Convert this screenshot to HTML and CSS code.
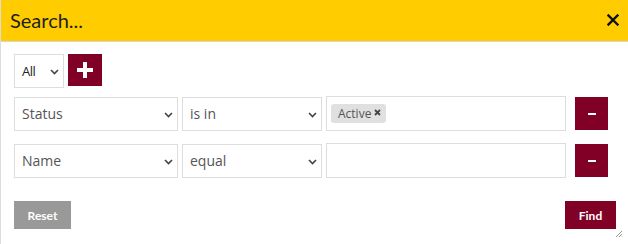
FILE: index.html
```html
<!DOCTYPE html>
<html lang="en">
<head>
    <meta charset="UTF-8">
    <meta name="viewport" content="width=device-width, initial-scale=1.0">
    <title>Search</title>
    <link rel="stylesheet" href="styles.css">
</head>
<body>
    <div class="dialog">
        <div class="dialog-head">
            <span class="dialog-title">Search...</span>
            <span class="dialog-close">
                <svg width="12" height="12" viewBox="0 0 12 12"><path d="M1.5 1.5 L10.5 10.5 M10.5 1.5 L1.5 10.5" stroke="#111" stroke-width="2.4" stroke-linecap="square"/></svg>
            </span>
        </div>
        <div class="dialog-body">
            <div class="combine-row">
                <label class="select-wrap select-small">
                    <select><option>All</option><option>Any</option></select>
                    <svg class="chevron" width="9" height="6" viewBox="0 0 9 6"><path d="M1 1 L4.5 4.5 L8 1" fill="none" stroke="#444" stroke-width="1.6"/></svg>
                </label>
                <button class="btn-square btn-add">
                    <svg width="18" height="18" viewBox="0 0 18 18"><path d="M9 1 V17 M1 9 H17" stroke="#fff" stroke-width="4"/></svg>
                </button>
            </div>

            <div class="criteria">
                <div class="criterion">
                    <label class="select-wrap">
                        <select><option>Status</option><option>Name</option></select>
                        <svg class="chevron" width="9" height="6" viewBox="0 0 9 6"><path d="M1 1 L4.5 4.5 L8 1" fill="none" stroke="#444" stroke-width="1.6"/></svg>
                    </label>
                    <label class="select-wrap">
                        <select><option>is in</option><option>equal</option></select>
                        <svg class="chevron" width="9" height="6" viewBox="0 0 9 6"><path d="M1 1 L4.5 4.5 L8 1" fill="none" stroke="#444" stroke-width="1.6"/></svg>
                    </label>
                    <div class="value-box">
                        <span class="tag">Active
                            <svg class="tag-x" width="7" height="7" viewBox="0 0 7 7"><path d="M1 1 L6 6 M6 1 L1 6" stroke="#444" stroke-width="1.8"/></svg>
                        </span>
                    </div>
                    <button class="btn-square btn-remove"><span class="dash"></span></button>
                </div>
                <div class="criterion">
                    <label class="select-wrap">
                        <select><option>Name</option><option>Status</option></select>
                        <svg class="chevron" width="9" height="6" viewBox="0 0 9 6"><path d="M1 1 L4.5 4.5 L8 1" fill="none" stroke="#444" stroke-width="1.6"/></svg>
                    </label>
                    <label class="select-wrap">
                        <select><option>equal</option><option>is in</option></select>
                        <svg class="chevron" width="9" height="6" viewBox="0 0 9 6"><path d="M1 1 L4.5 4.5 L8 1" fill="none" stroke="#444" stroke-width="1.6"/></svg>
                    </label>
                    <input class="value-box" type="text">
                    <button class="btn-square btn-remove"><span class="dash"></span></button>
                </div>
            </div>

            <div class="dialog-foot">
                <button class="btn btn-reset">Reset</button>
                <button class="btn btn-find">Find</button>
            </div>
        </div>
        <svg class="grip" width="8" height="8" viewBox="0 0 8 8"><path d="M7 1 L1 7 M7 4 L4 7 M7 6.5 L6.5 7" stroke="#999" stroke-width="1"/></svg>
    </div>
</body>
</html>
```

FILE: styles.css
```css
body {
    margin: 0;
    font-family: 'Open Sans', sans-serif;
    background: #ffffff;
}
.dialog {
    position: relative;
    width: 628px;
    height: 244px;
    box-sizing: border-box;
    border-left: 1px solid #dcdcdc;
    background: #ffffff;
}
.dialog-head {
    height: 41px;
    background-color: #ffcc00;
    border-bottom: 1px solid #d6d6d6;
    display: flex;
    align-items: center;
    justify-content: space-between;
    padding: 0 9px 0 9px;
}
.dialog-title {
    font-family: 'Lato', sans-serif;
    font-size: 20px;
    color: #1e1e1e;
    margin-top: -1px;
}
.dialog-close {
    display: flex;
    margin-top: -1px;
}
.dialog-body {
    padding: 12px 12px 0 13px;
}
.combine-row {
    display: flex;
    align-items: flex-start;
    gap: 4px;
}
.select-wrap {
    position: relative;
    display: block;
    height: 34px;
}
.select-wrap select {
    appearance: none;
    -webkit-appearance: none;
    width: 100%;
    height: 100%;
    box-sizing: border-box;
    border: 1px solid #dddddd;
    border-radius: 0;
    background: #ffffff;
    padding: 0 20px 0 7px;
    font-family: 'Open Sans', sans-serif;
    font-size: 14px;
    color: #555555;
    outline: none;
}
.select-wrap .chevron {
    position: absolute;
    right: 5px;
    top: 15px;
    pointer-events: none;
}
.select-small {
    width: 50px;
}
.select-small select {
    font-size: 13px;
    color: #222222;
    letter-spacing: -0.5px;
}
.btn-square {
    border: none;
    padding: 0;
    background-color: #800026;
    display: flex;
    align-items: center;
    justify-content: center;
    cursor: pointer;
}
.btn-add {
    width: 34px;
    height: 32px;
}
.btn-remove {
    width: 33px;
    height: 33px;
    margin-left: 5px;
}
.dash {
    display: block;
    width: 8px;
    height: 2px;
    background: #ffffff;
}
.criteria {
    display: flex;
    flex-direction: column;
    gap: 12px;
    margin-top: 8px;
}
.criterion {
    display: grid;
    grid-template-columns: 164px 140px 240px 38px;
    column-gap: 4px;
    align-items: center;
    height: 35px;
}
.value-box {
    height: 35px;
    box-sizing: border-box;
    border: 1px solid #dddddd;
    background: #ffffff;
    display: flex;
    align-items: center;
    padding: 0 4px;
    margin: 0;
    outline: none;
    font-family: 'Open Sans', sans-serif;
}
.tag {
    display: inline-flex;
    align-items: center;
    height: 19px;
    padding: 0 5px 0 7px;
    background-color: #e0e0e0;
    border-radius: 3px;
    font-size: 12px;
    color: #555555;
    gap: 3px;
}
.tag-x {
    margin-top: -2px;
}
.dialog-foot {
    display: flex;
    justify-content: space-between;
    margin-top: 23px;
}
.btn {
    height: 28px;
    border: none;
    font-family: 'Lato', sans-serif;
    font-weight: bold;
    font-size: 12px;
    color: #ffffff;
    cursor: pointer;
}
.btn-reset {
    width: 57px;
    background-color: #999999;
}
.btn-find {
    width: 51px;
    background-color: #800026;
}
.grip {
    position: absolute;
    right: 5px;
    bottom: 6px;
}
```
